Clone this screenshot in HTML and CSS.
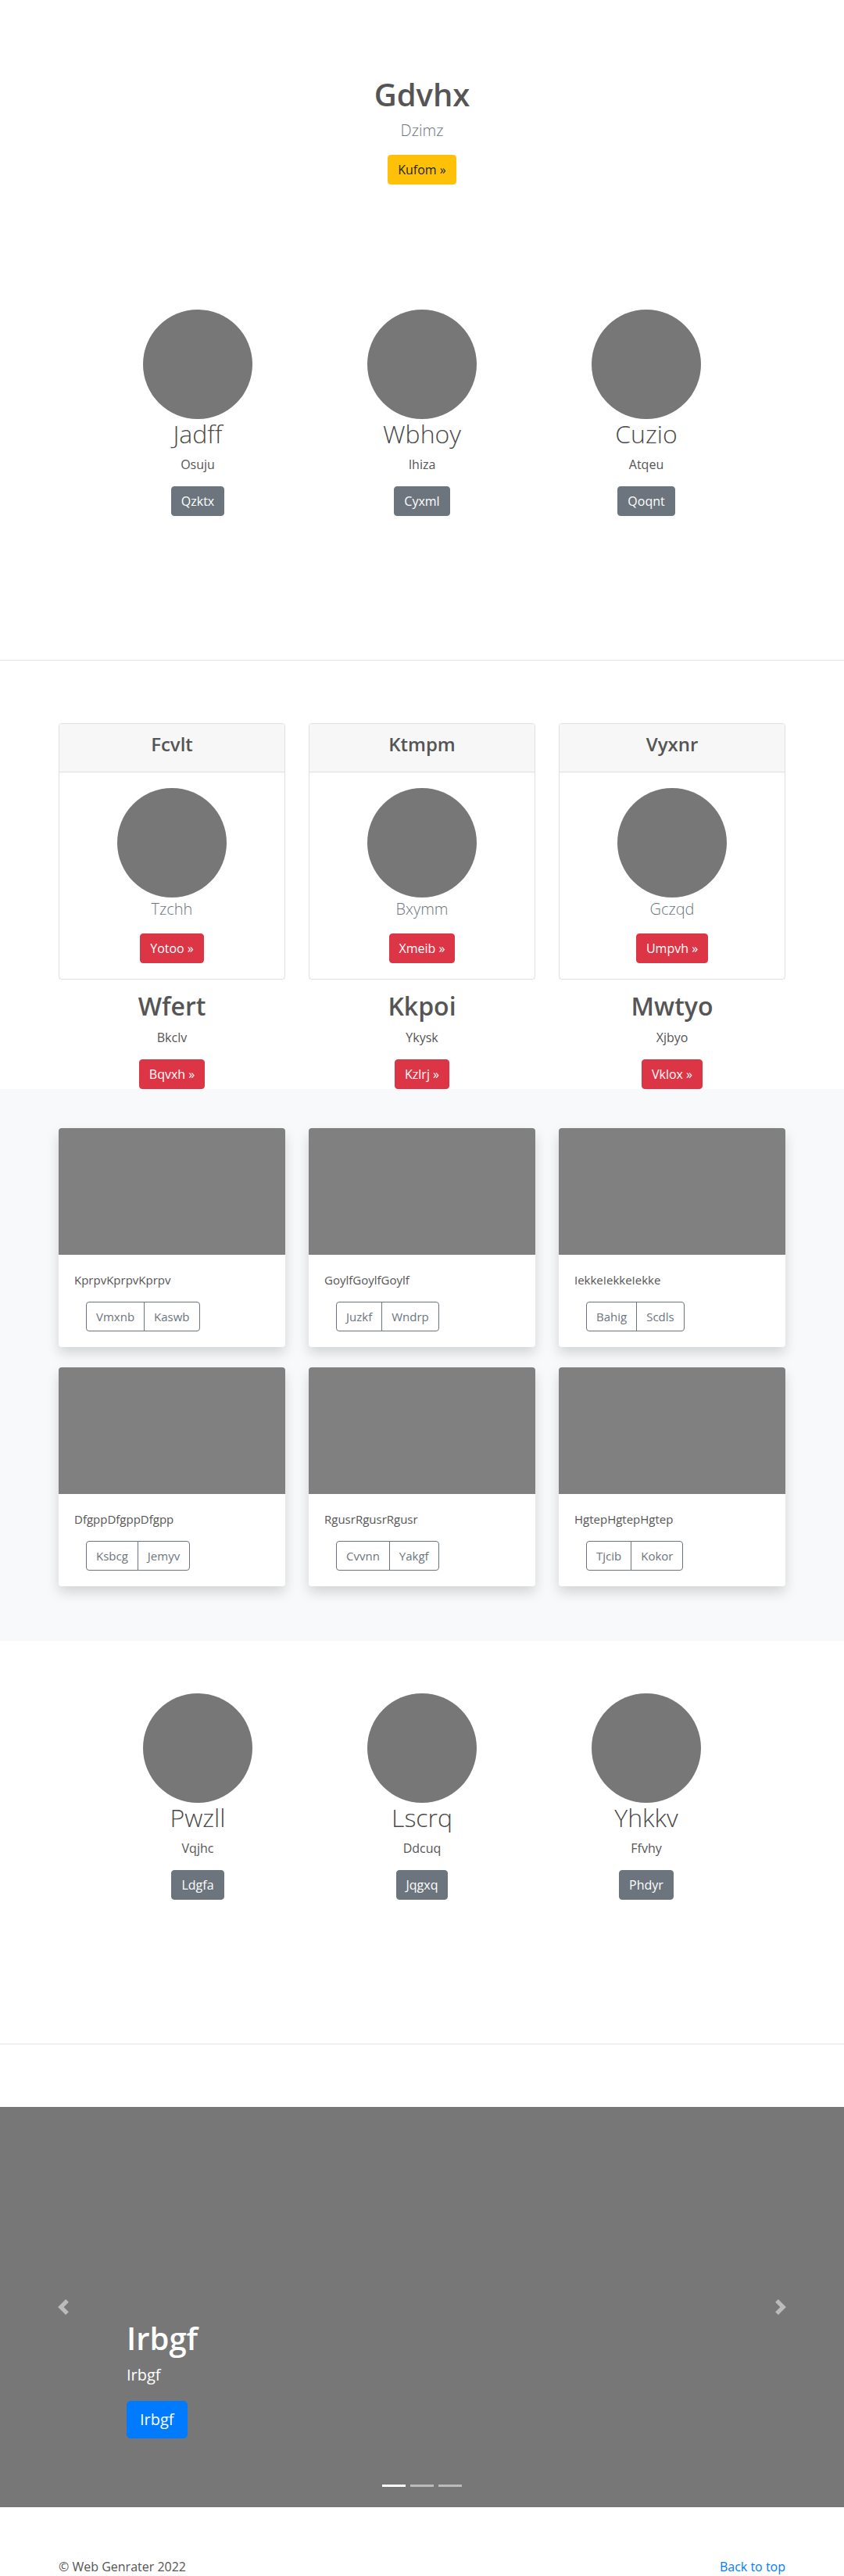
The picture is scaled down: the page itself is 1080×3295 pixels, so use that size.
FILE: index.html
```html
<!DOCTYPE html>
<html lang="en">
<head>
<meta charset="utf-8">
<title>Gdvhx</title>
<link rel="stylesheet" href="styles.css">
</head>
<body>
<section class="hero">
  <h1 class="hero-title">Gdvhx</h1>
  <p class="lead">Dzimz</p>
  <a class="btn btn-warning" href="#">Kufom &raquo;</a>
</section>

<section class="marketing first">
  <div class="mk-col">
    <div class="circle"></div>
    <h2 class="mk-name">Jadff</h2>
    <p class="mk-sub">Osuju</p>
    <a class="btn btn-secondary" href="#">Qzktx</a>
  </div>
  <div class="mk-col">
    <div class="circle"></div>
    <h2 class="mk-name">Wbhoy</h2>
    <p class="mk-sub">Ihiza</p>
    <a class="btn btn-secondary" href="#">Cyxml</a>
  </div>
  <div class="mk-col">
    <div class="circle"></div>
    <h2 class="mk-name">Cuzio</h2>
    <p class="mk-sub">Atqeu</p>
    <a class="btn btn-secondary" href="#">Qoqnt</a>
  </div>
</section>

<hr class="divider">

<section class="container three-col pricing">
  <div class="p-col">
    <div class="card">
      <div class="card-header"><h4 class="card-title">Fcvlt</h4></div>
      <div class="card-body">
        <div class="circle"></div>
        <p class="lead">Tzchh</p>
        <a class="btn btn-danger" href="#">Yotoo &raquo;</a>
      </div>
    </div>
    <h2 class="p-name">Wfert</h2>
    <p class="p-sub">Bkclv</p>
    <a class="btn btn-danger" href="#">Bqvxh &raquo;</a>
  </div>
  <div class="p-col">
    <div class="card">
      <div class="card-header"><h4 class="card-title">Ktmpm</h4></div>
      <div class="card-body">
        <div class="circle"></div>
        <p class="lead">Bxymm</p>
        <a class="btn btn-danger" href="#">Xmeib &raquo;</a>
      </div>
    </div>
    <h2 class="p-name">Kkpoi</h2>
    <p class="p-sub">Ykysk</p>
    <a class="btn btn-danger" href="#">Kzlrj &raquo;</a>
  </div>
  <div class="p-col">
    <div class="card">
      <div class="card-header"><h4 class="card-title">Vyxnr</h4></div>
      <div class="card-body">
        <div class="circle"></div>
        <p class="lead">Gczqd</p>
        <a class="btn btn-danger" href="#">Umpvh &raquo;</a>
      </div>
    </div>
    <h2 class="p-name">Mwtyo</h2>
    <p class="p-sub">Xjbyo</p>
    <a class="btn btn-danger" href="#">Vklox &raquo;</a>
  </div>
</section>

<section class="album">
  <div class="container three-col album-grid">
    <div class="fcard">
      <div class="thumb"></div>
      <div class="fcard-body">
        <p class="fcard-text">KprpvKprpvKprpv</p>
        <div class="btn-group"><a class="btn btn-outline" href="#">Vmxnb</a><a class="btn btn-outline" href="#">Kaswb</a></div>
      </div>
    </div>
    <div class="fcard">
      <div class="thumb"></div>
      <div class="fcard-body">
        <p class="fcard-text">GoylfGoylfGoylf</p>
        <div class="btn-group"><a class="btn btn-outline" href="#">Juzkf</a><a class="btn btn-outline" href="#">Wndrp</a></div>
      </div>
    </div>
    <div class="fcard">
      <div class="thumb"></div>
      <div class="fcard-body">
        <p class="fcard-text">IekkeIekkeIekke</p>
        <div class="btn-group"><a class="btn btn-outline" href="#">Bahig</a><a class="btn btn-outline" href="#">Scdls</a></div>
      </div>
    </div>
    <div class="fcard">
      <div class="thumb"></div>
      <div class="fcard-body">
        <p class="fcard-text">DfgppDfgppDfgpp</p>
        <div class="btn-group"><a class="btn btn-outline" href="#">Ksbcg</a><a class="btn btn-outline" href="#">Jemyv</a></div>
      </div>
    </div>
    <div class="fcard">
      <div class="thumb"></div>
      <div class="fcard-body">
        <p class="fcard-text">RgusrRgusrRgusr</p>
        <div class="btn-group"><a class="btn btn-outline" href="#">Cvvnn</a><a class="btn btn-outline" href="#">Yakgf</a></div>
      </div>
    </div>
    <div class="fcard">
      <div class="thumb"></div>
      <div class="fcard-body">
        <p class="fcard-text">HgtepHgtepHgtep</p>
        <div class="btn-group"><a class="btn btn-outline" href="#">Tjcib</a><a class="btn btn-outline" href="#">Kokor</a></div>
      </div>
    </div>
  </div>
</section>

<section class="marketing second">
  <div class="mk-col">
    <div class="circle"></div>
    <h2 class="mk-name">Pwzll</h2>
    <p class="mk-sub">Vqjhc</p>
    <a class="btn btn-secondary" href="#">Ldgfa</a>
  </div>
  <div class="mk-col">
    <div class="circle"></div>
    <h2 class="mk-name">Lscrq</h2>
    <p class="mk-sub">Ddcuq</p>
    <a class="btn btn-secondary" href="#">Jqgxq</a>
  </div>
  <div class="mk-col">
    <div class="circle"></div>
    <h2 class="mk-name">Yhkkv</h2>
    <p class="mk-sub">Ffvhy</p>
    <a class="btn btn-secondary" href="#">Phdyr</a>
  </div>
</section>

<hr class="divider">

<section class="carousel">
  <div class="caption">
    <h1 class="caption-title">Irbgf</h1>
    <p class="caption-text">Irbgf</p>
    <div><a class="btn btn-lg btn-primary" href="#">Irbgf</a></div>
  </div>
  <a class="ctrl ctrl-prev" href="#" aria-label="Previous">
    <svg width="20" height="20" viewBox="0 0 8 8"><path fill="#fff" d="M5.25 0l-4 4 4 4 1.5-1.5L4.25 4l2.5-2.5L5.25 0z"/></svg>
  </a>
  <a class="ctrl ctrl-next" href="#" aria-label="Next">
    <svg width="20" height="20" viewBox="0 0 8 8"><path fill="#fff" d="M2.75 0l-1.5 1.5L3.75 4l-2.5 2.5L2.75 8l4-4-4-4z"/></svg>
  </a>
  <ol class="indicators"><li class="active"></li><li></li><li></li></ol>
</section>

<footer class="container footer">
  <p>&copy; Web Genrater 2022</p>
  <a class="to-top" href="#">Back to top</a>
</footer>
</body>
</html>
```

FILE: styles.css
```css
* { box-sizing: border-box; }

body {
  margin: 0;
  font-family: "Open Sans", "Noto Sans", sans-serif;
  font-size: 16px;
  line-height: 1.5;
  color: #555;
  background: #fff;
}

h1, h2, h4, p { margin: 0; }

.container {
  width: 930px;
  margin: 0 auto;
}

.three-col {
  display: grid;
  grid-template-columns: repeat(3, 290px);
  column-gap: 30px;
}

/* buttons */
.btn {
  display: inline-block;
  font-size: 16px;
  line-height: 24px;
  padding: 6px 12px;
  border: 1px solid transparent;
  border-radius: 4px;
  text-decoration: none;
  text-align: center;
  white-space: nowrap;
}
.btn-warning { background: #ffc107; border-color: #ffc107; color: #212529; }
.btn-secondary { background: #6c757d; border-color: #6c757d; color: #fff; }
.btn-danger { background: #dc3545; border-color: #dc3545; color: #fff; }
.btn-primary { background: #007bff; border-color: #007bff; color: #fff; }
.btn-lg { font-size: 20px; line-height: 30px; padding: 8px 16px; border-radius: 5px; }

.lead {
  font-size: 20px;
  line-height: 30px;
  font-weight: 300;
  color: #6c757d;
  margin-bottom: 16px;
}

/* hero */
.hero {
  padding-top: 97px;
  text-align: center;
}
.hero-title {
  font-size: 40px;
  line-height: 48px;
  font-weight: 600;
  margin-bottom: 7px;
}

/* circle marketing rows */
.marketing {
  display: grid;
  grid-template-columns: repeat(3, 287px);
  justify-content: center;
  text-align: center;
}
.marketing.first { margin-top: 160px; }
.marketing.second { margin-top: 67px; }

.circle {
  width: 140px;
  height: 140px;
  border-radius: 50%;
  background: #777;
  margin: 0 auto;
}
.mk-name {
  font-size: 32px;
  line-height: 38.4px;
  font-weight: 300;
  color: #4a4a4a;
  margin-bottom: 8px;
}
.mk-sub { margin-bottom: 16px; }

.divider {
  margin: 184px 0 0;
  border: 0;
  border-top: 1px solid #e5e5e5;
  height: 0;
}

/* pricing cards */
.pricing {
  margin-top: 80px;
  text-align: center;
}
.card {
  border: 1px solid #dfdfdf;
  border-radius: 4px;
  overflow: hidden;
  margin-bottom: 15px;
}
.card-header {
  background: #f7f7f7;
  border-bottom: 1px solid #dfdfdf;
  padding: 12px 20px;
}
.card-title {
  font-size: 24px;
  line-height: 28.8px;
  font-weight: 600;
  margin-bottom: 8px;
}
.card-body { padding: 20px; }
.card-body .lead { margin-bottom: 16px; }
.p-name {
  font-size: 32px;
  line-height: 38.4px;
  font-weight: 600;
  margin-bottom: 8px;
}
.p-sub { margin-bottom: 16px; }

/* album */
.album {
  background: #f8f9fa;
  padding: 50px 0 70px;
}
.album-grid { row-gap: 26px; }
.fcard {
  background: #fff;
  border-radius: 4px;
  overflow: hidden;
  box-shadow: 0 8px 16px rgba(0, 0, 0, 0.15);
}
.thumb {
  height: 162px;
  background: #808080;
}
.fcard-body { padding: 20px; }
.fcard-text {
  font-size: 15px;
  line-height: 24px;
  margin-bottom: 16px;
}
.btn-group {
  display: inline-flex;
  margin-left: 15px;
}
.btn-outline {
  color: #6c757d;
  border-color: #6c757d;
  font-size: 15px;
}
.btn-group .btn-outline:first-child {
  border-top-right-radius: 0;
  border-bottom-right-radius: 0;
}
.btn-group .btn-outline + .btn-outline {
  margin-left: -1px;
  border-top-left-radius: 0;
  border-bottom-left-radius: 0;
}

/* carousel */
.carousel {
  position: relative;
  height: 512px;
  margin-top: 80px;
  background: #777;
  color: #fff;
  display: flex;
  align-items: flex-end;
  padding: 0 0 88px 162px;
}
.caption-title {
  font-size: 40px;
  line-height: 48px;
  font-weight: 600;
  margin-bottom: 8px;
}
.caption-text {
  font-size: 20px;
  line-height: 30px;
  margin-bottom: 18px;
}
.ctrl {
  position: absolute;
  top: 0;
  bottom: 0;
  width: 15%;
  display: flex;
  align-items: center;
  justify-content: center;
  opacity: 0.5;
}
.ctrl-prev { left: 0; }
.ctrl-next { right: 0; }
.indicators {
  position: absolute;
  left: 0;
  right: 0;
  bottom: 26px;
  margin: 0;
  padding: 0;
  list-style: none;
  display: flex;
  justify-content: center;
  gap: 6px;
}
.indicators li {
  width: 30px;
  height: 3px;
  background: rgba(255, 255, 255, 0.5);
}
.indicators li.active { background: #fff; }

/* footer */
.footer {
  display: flex;
  justify-content: space-between;
  padding-top: 64px;
}
.to-top {
  color: #007bff;
  text-decoration: none;
}
```
